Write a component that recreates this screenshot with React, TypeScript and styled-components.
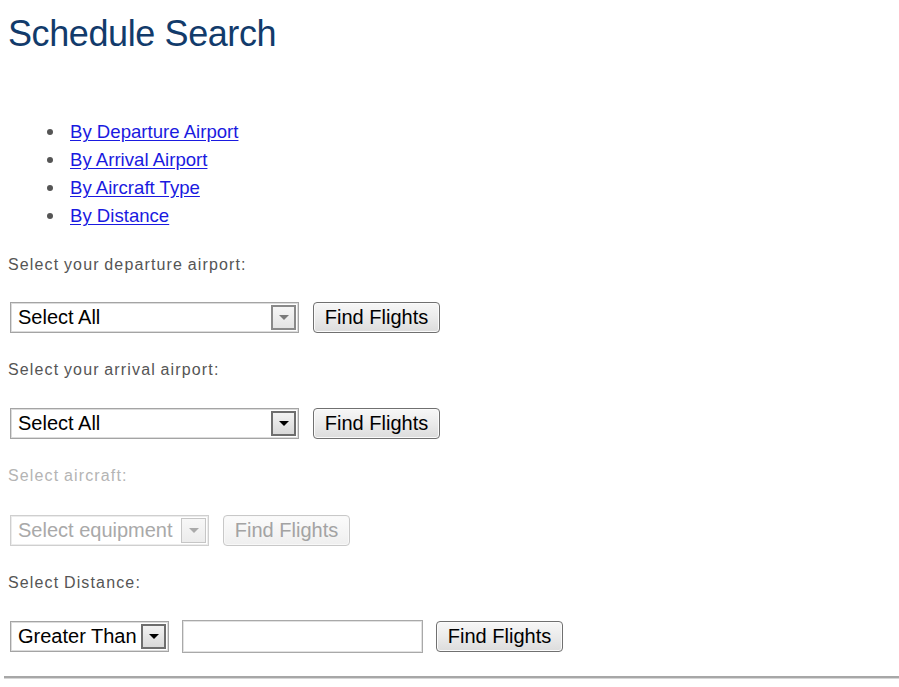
import React from "react";
import styled, { createGlobalStyle, css } from "styled-components";

const Global = createGlobalStyle`
  html, body { margin: 0; padding: 0; background: #ffffff; }
  body { font-family: "Liberation Sans", Arial, sans-serif; }
`;

const Page = styled.div`
  width: 899px;
  height: 687px;
  overflow: hidden;
  display: flex;
  flex-direction: column;
  padding: 0 0 0 8px;
  box-sizing: border-box;
`;

const Title = styled.h1`
  margin: 16px 0 0 0;
  font-size: 36px;
  line-height: 36px;
  font-weight: normal;
  letter-spacing: -0.4px;
  color: #123b6b;
`;

const Menu = styled.ul`
  list-style: none;
  margin: 66px 0 0 0;
  padding: 0 0 0 39px;
  display: flex;
  flex-direction: column;
`;

const MenuItem = styled.li`
  display: flex;
  align-items: center;
  height: 28px;
  &::before {
    content: "";
    width: 6px;
    height: 6px;
    border-radius: 50%;
    background: #555;
    margin-right: 17px;
    flex: none;
  }
`;

const MenuLink = styled.a`
  font-size: 18.6px;
  color: #1a1ae0;
  text-decoration: underline;
  text-underline-offset: 2px;
`;

const Label = styled.div<{ $top: number; $disabled?: boolean }>`
  margin-top: ${(p) => p.$top}px;
  font-size: 16px;
  line-height: 20px;
  letter-spacing: 1.15px;
  word-spacing: -1px;
  color: ${(p) => (p.$disabled ? "#b4b4b4" : "#555555")};
`;

const Row = styled.div<{ $top: number }>`
  margin-top: ${(p) => p.$top}px;
  display: flex;
  align-items: center;
  gap: 14px;
  padding-left: 2px;
`;

const SelectBox = styled.div<{ $w: number; $disabled?: boolean }>`
  width: ${(p) => p.$w}px;
  height: 31px;
  box-sizing: border-box;
  display: flex;
  align-items: center;
  border: 1px solid ${(p) => (p.$disabled ? "#cfcfcf" : "#a4a4a4")};
  box-shadow: inset 0 0 0 1px ${(p) => (p.$disabled ? "#ececec" : "#dcdcdc")};
  background: #fff;
  padding: 2px;
`;

const SelectText = styled.span<{ $disabled?: boolean }>`
  flex: 1;
  font-size: 20px;
  padding-left: 5px;
  color: ${(p) => (p.$disabled ? "#a9a9a9" : "#000")};
  white-space: nowrap;
`;

const ArrowBox = styled.span<{ $tone: "dark" | "soft" | "off" }>`
  width: 25px;
  height: 100%;
  box-sizing: border-box;
  display: flex;
  align-items: center;
  justify-content: center;
  ${(p) =>
    p.$tone === "dark"
      ? css`
          border: 2px solid #6e6e6e;
          background: linear-gradient(#f2f2f2, #d9d9d9);
        `
      : p.$tone === "soft"
      ? css`
          border: 2px solid #8a8a8a;
          background: linear-gradient(#f6f6f6, #e4e4e4);
        `
      : css`
          border: 1px solid #c6c6c6;
          background: linear-gradient(#f7f7f7, #ececec);
        `}
  &::after {
    content: "";
    width: 0;
    height: 0;
    border-left: 5px solid transparent;
    border-right: 5px solid transparent;
    border-top: 5px solid
      ${(p) => (p.$tone === "dark" ? "#000" : p.$tone === "soft" ? "#7a7a7a" : "#aaaaaa")};
  }
`;

const Button = styled.button<{ $disabled?: boolean }>`
  height: 31px;
  width: 127px;
  padding: 0;
  font-family: "Liberation Sans", Arial, sans-serif;
  font-size: 20px;
  color: ${(p) => (p.$disabled ? "#a3a3a3" : "#000")};
  border: 1px solid ${(p) => (p.$disabled ? "#c8c8c8" : "#707070")};
  border-radius: 4px;
  background: ${(p) =>
    p.$disabled ? "linear-gradient(#fbfbfb, #efefef)" : "linear-gradient(#f7f7f7 0%, #ebebeb 50%, #dcdcdc 100%)"};
  box-shadow: inset 0 0 0 1px ${(p) => (p.$disabled ? "#f8f8f8" : "#fbfbfb")};
  cursor: default;
`;

const TextInput = styled.input`
  width: 241px;
  height: 33px;
  box-sizing: border-box;
  border: 1px solid #a9a9a9;
  box-shadow: inset 0 0 0 1px #e2e2e2;
  font-size: 20px;
  margin: 0 -1px 0 -1px;
  outline: none;
`;

const Rule = styled.hr`
  margin: 23px 0 0 -4px;
  height: 0;
  border: none;
  border-top: 2px solid #a7a7a7;
  border-bottom: 1px solid #d6d6d6;
`;

function Select({
  w,
  text,
  tone,
  disabled,
}: {
  w: number;
  text: string;
  tone: "dark" | "soft" | "off";
  disabled?: boolean;
}) {
  return (
    <SelectBox $w={w} $disabled={disabled}>
      <SelectText $disabled={disabled}>{text}</SelectText>
      <ArrowBox $tone={tone} />
    </SelectBox>
  );
}

export default function App() {
  const links = ["By Departure Airport", "By Arrival Airport", "By Aircraft Type", "By Distance"];
  return (
    <>
      <Global />
      <Page>
        <Title>Schedule Search</Title>
        <Menu>
          {links.map((l) => (
            <MenuItem key={l}>
              <MenuLink href="#">{l}</MenuLink>
            </MenuItem>
          ))}
        </Menu>

        <Label $top={25}>Select your departure airport:</Label>
        <Row $top={27}>
          <Select w={289} text="Select All" tone="soft" />
          <Button>Find Flights</Button>
        </Row>

        <Label $top={27}>Select your arrival airport:</Label>
        <Row $top={28}>
          <Select w={289} text="Select All" tone="dark" />
          <Button>Find Flights</Button>
        </Row>

        <Label $top={27} $disabled>
          Select aircraft:
        </Label>
        <Row $top={29}>
          <Select w={199} text="Select equipment" tone="off" disabled />
          <Button $disabled disabled>
            Find Flights
          </Button>
        </Row>

        <Label $top={27}>Select Distance:</Label>
        <Row $top={27}>
          <Select w={159} text="Greater Than" tone="dark" />
          <TextInput type="text" />
          <Button>Find Flights</Button>
        </Row>

        <Rule />
      </Page>
    </>
  );
}
